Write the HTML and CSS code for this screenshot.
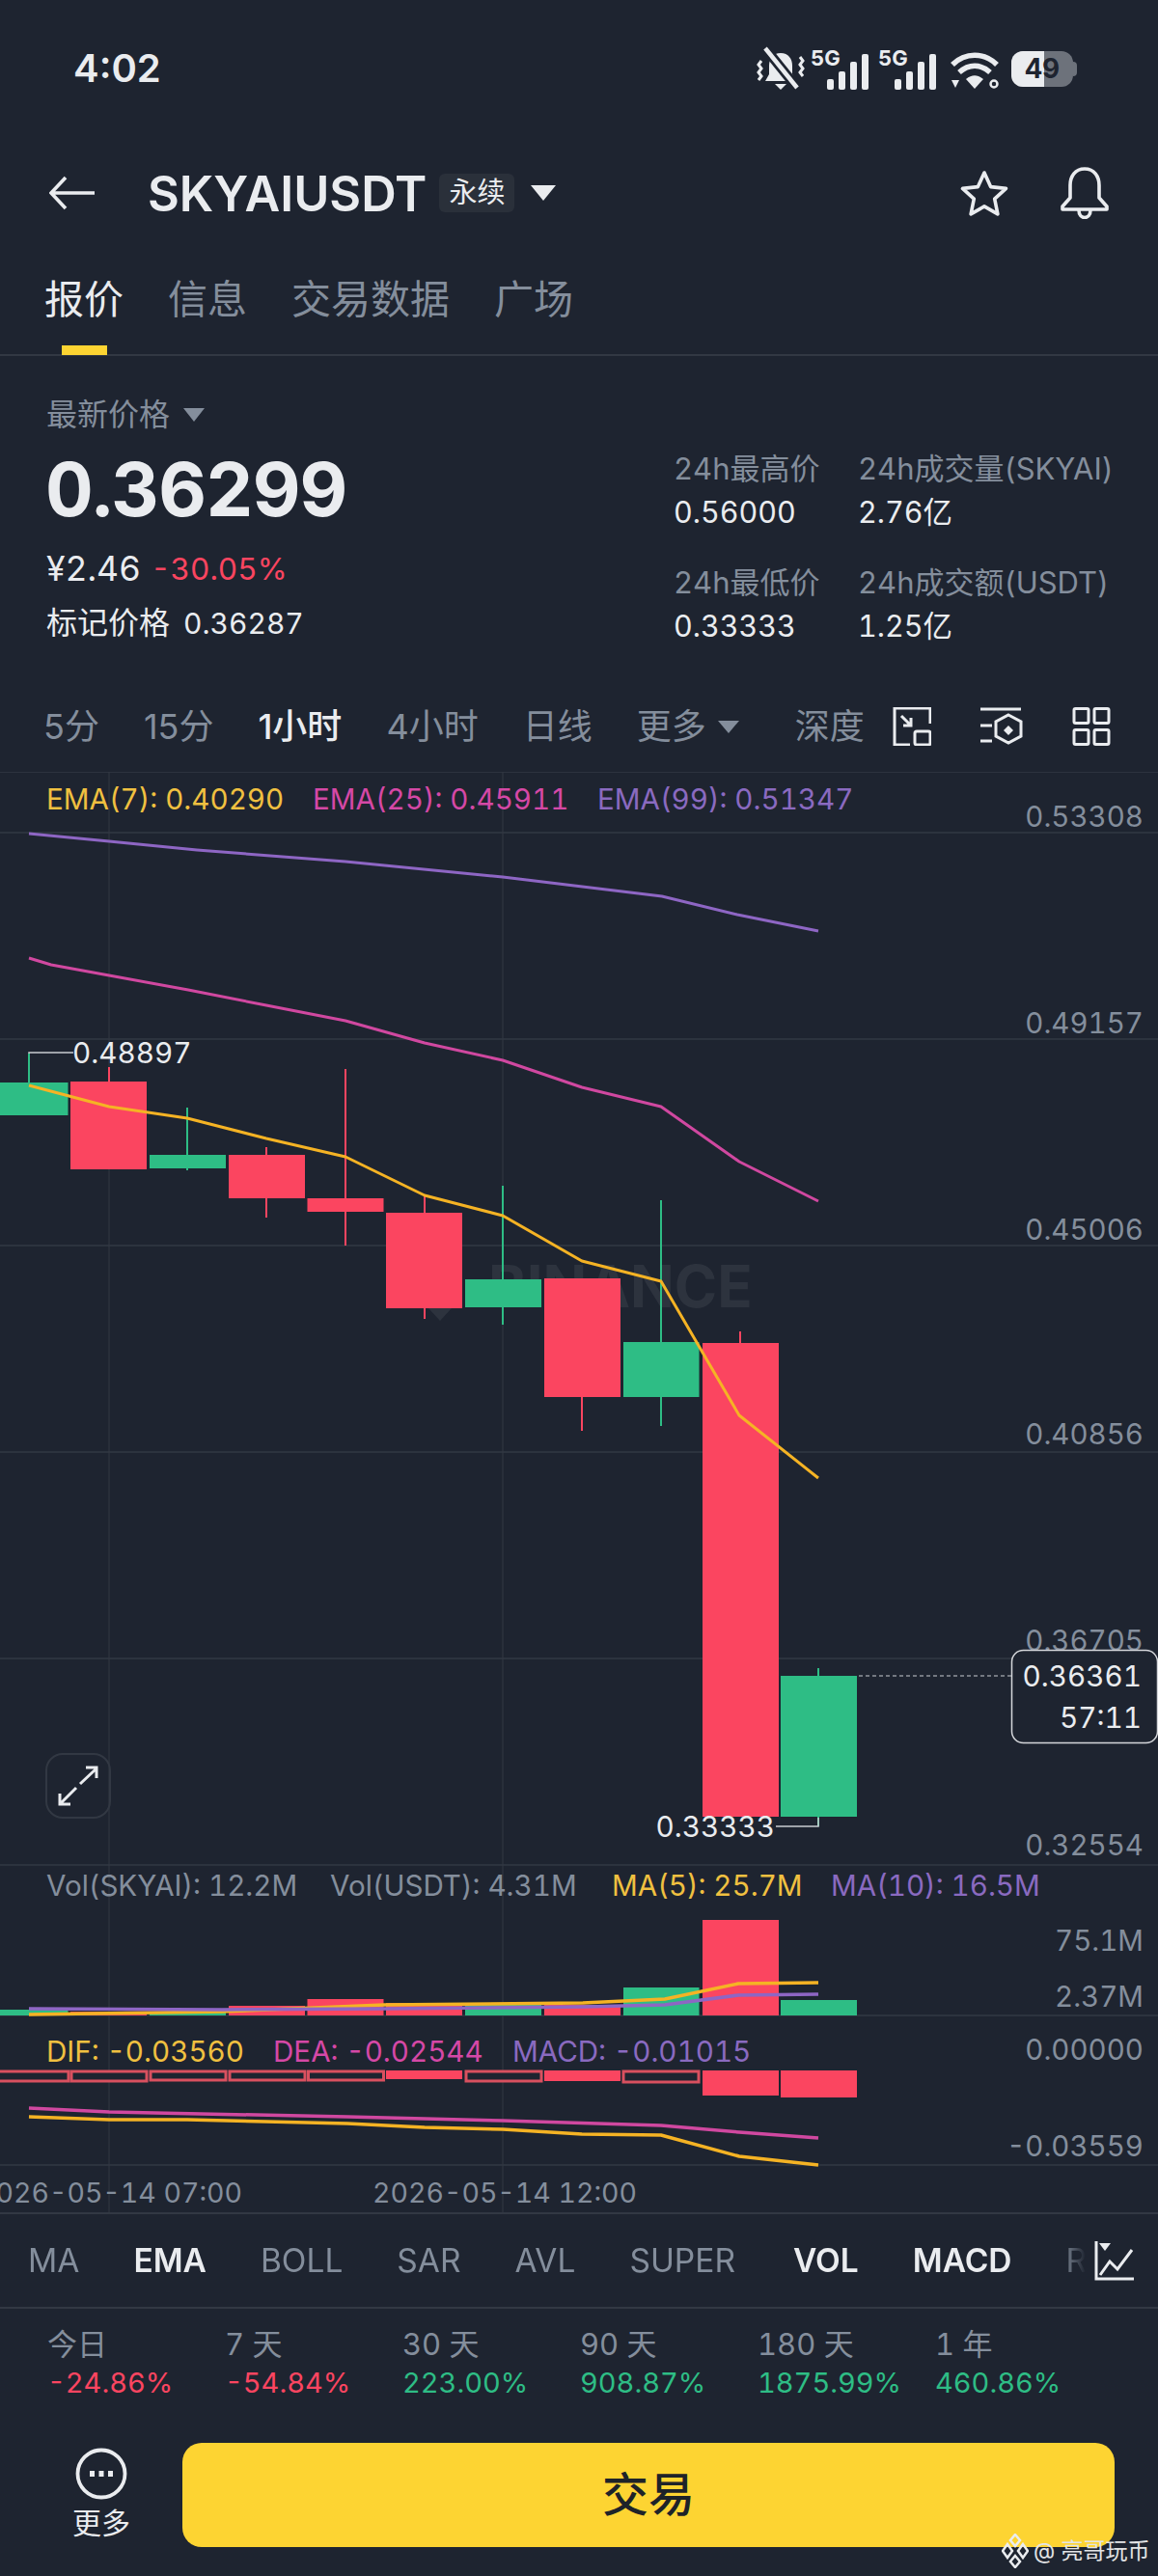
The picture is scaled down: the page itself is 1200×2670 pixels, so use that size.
FILE: index.html
```html
<!DOCTYPE html>
<html lang="zh-CN">
<head>
  <meta charset="UTF-8" />
  <meta name="viewport" content="width=device-width, initial-scale=1" />
  <title>SKYAIUSDT 永续</title>
  <link rel="stylesheet" href="styles.css">
</head>
<body>
  <div class="screen">
    <!-- status bar -->
    <div class="status">
      <div class="clock">4:02</div>
      <div class="status-icons">
        <svg class="ic-mute" viewBox="0 0 50 44" width="50" height="44">
          <path d="M25 5c-8 0-12 6-12 13v9l-4 7h32l-4-7v-9c0-7-4-13-12-13z" fill="#eaecef"/>
          <path d="M19 37h12l-6 6z" fill="#eaecef"/>
          <path d="M9 0l33 41" stroke="#1e2430" stroke-width="10"/>
          <path d="M9 0l33 41" stroke="#eaecef" stroke-width="4.500"/>
          <path d="M5 13l-3 4 3 4-3 4 3 4 -3 4M45 9l3 4-3 4 3 4-3 4 3 4" fill="none" stroke="#eaecef" stroke-width="3"/>
        </svg>
        <svg class="ic-signal" viewBox="0 0 62 44" width="62" height="44">
          <text class="five-g" x="0" y="18">5G</text>
          <rect x="17" y="32" width="7" height="11" rx="2"/>
          <rect x="29" y="24" width="7" height="19" rx="2"/>
          <rect x="41" y="14" width="7" height="29" rx="2"/>
          <rect x="53" y="6" width="7" height="37" rx="2"/>
        </svg>
        <svg class="ic-signal" viewBox="0 0 62 44" width="62" height="44">
          <text class="five-g" x="0" y="18">5G</text>
          <rect x="17" y="32" width="7" height="11" rx="2"/>
          <rect x="29" y="24" width="7" height="19" rx="2"/>
          <rect x="41" y="14" width="7" height="29" rx="2"/>
          <rect x="53" y="6" width="7" height="37" rx="2"/>
        </svg>
        <svg class="ic-wifi" viewBox="0 0 50 40" width="50" height="40">
          <path d="M2 14C15 1 35 1 48 14M9 22c10-9 22-9 32 0" fill="none" stroke="#eaecef" stroke-width="5.500"/>
          <path d="M16 29c6-5 12-5 18 0l-9 10z" fill="#eaecef"/>
          <path d="M1 30h8l-4 8z" fill="#eaecef"/>
          <circle cx="45" cy="34" r="3.500" fill="none" stroke="#eaecef" stroke-width="2.500"/>
        </svg>
        <div class="battery"><span class="battery-fill"></span><span class="battery-num">49</span></div>
      </div>
    </div>

    <!-- symbol header -->
    <div class="symbol-bar">
      <svg class="back" viewBox="0 0 48 36" width="48" height="36">
        <path d="M47 18H3M17 2L2 18l15 16" fill="none" stroke="#eaecef" stroke-width="3.600"/>
      </svg>
      <div class="symbol">SKYAIUSDT</div>
      <div class="perp">永续</div>
      <div class="caret caret-white"></div>
      <div class="symbol-actions">
        <svg viewBox="0 0 50 48" width="50" height="48">
          <path d="M25 3l6.600 14.600 15.900 1.800-11.800 10.800 3.200 15.700L25 37.900l-13.900 8 3.200-15.700L2.500 19.400l15.900-1.800z" fill="none" stroke="#eaecef" stroke-width="3.600" stroke-linejoin="round"/>
        </svg>
        <svg viewBox="0 0 52 54" width="52" height="54">
          <path d="M26 2c-10 0-15 8-15 17v13l-8 9v3h46v-3l-8-9V19c0-9-5-17-15-17z" fill="none" stroke="#eaecef" stroke-width="3.600" stroke-linejoin="round"/>
          <path d="M20 45c0 10 12 10 12 0" fill="none" stroke="#eaecef" stroke-width="3.600"/>
        </svg>
      </div>
    </div>

    <!-- page tabs -->
    <div class="page-tabs">
      <div class="page-tab active">报价</div>
      <div class="page-tab">信息</div>
      <div class="page-tab">交易数据</div>
      <div class="page-tab">广场</div>
    </div>

    <!-- price block -->
    <div class="quote">
      <div class="quote-main">
        <div class="last-label">最新价格<span class="caret caret-gray"></span></div>
        <div class="last-price">0.36299</div>
        <div class="last-sub"><span class="cny">¥2.46</span><span class="red">-30.05%</span></div>
        <div class="mark"><span class="mark-label">标记价格</span><span class="mark-val">0.36287</span></div>
      </div>
      <div class="quote-stats">
        <div class="stat"><div class="stat-label">24h最高价</div><div class="stat-val">0.56000</div></div>
        <div class="stat"><div class="stat-label">24h成交量(SKYAI)</div><div class="stat-val">2.76亿</div></div>
        <div class="stat"><div class="stat-label">24h最低价</div><div class="stat-val">0.33333</div></div>
        <div class="stat"><div class="stat-label">24h成交额(USDT)</div><div class="stat-val">1.25亿</div></div>
      </div>
    </div>

    <!-- interval tabs -->
    <div class="intervals">
      <div class="interval">5分</div>
      <div class="interval">15分</div>
      <div class="interval active">1小时</div>
      <div class="interval">4小时</div>
      <div class="interval">日线</div>
      <div class="interval interval-more">更多<span class="caret caret-gray"></span></div>
      <div class="interval depth">深度</div>
      <div class="interval-icons">
        <svg viewBox="0 0 40 40" width="40" height="40">
          <path d="M18 39H2V1h37v16" fill="none" stroke="#eaecef" stroke-width="3"/>
          <rect x="23" y="25" width="16" height="14" rx="2" fill="none" stroke="#eaecef" stroke-width="3"/>
          <path d="M9 9l10 10M19 11v8h-8" fill="none" stroke="#eaecef" stroke-width="3"/>
        </svg>
        <svg viewBox="0 0 44 40" width="44" height="40">
          <path d="M0 2h42M0 19h12M0 35h12" fill="none" stroke="#eaecef" stroke-width="3"/>
          <path d="M29 11l13 7v15l-13 7-13-7V18z" transform="translate(0 -3)" fill="none" stroke="#eaecef" stroke-width="3"/>
          <path d="M29 19l5 5-5 5-5-5z" fill="#eaecef"/>
        </svg>
        <svg viewBox="0 0 40 40" width="40" height="40">
          <rect x="2" y="1.500" width="15" height="15" rx="1.500" fill="none" stroke="#eaecef" stroke-width="3"/>
          <rect x="23" y="1.500" width="15" height="15" rx="1.500" fill="none" stroke="#eaecef" stroke-width="3"/>
          <rect x="2" y="23.500" width="15" height="15" rx="1.500" fill="none" stroke="#eaecef" stroke-width="3"/>
          <rect x="23" y="23.500" width="15" height="15" rx="1.500" fill="none" stroke="#eaecef" stroke-width="3"/>
        </svg>
      </div>
    </div>

    <!-- chart: viewBox uses page coordinates -->
    <div class="chart">
      <svg class="chart-svg" viewBox="0 800 1200 1493" width="1200" height="1493">
        <g class="grid">
          <path d="M0 800H1200M0 863H1200M0 1077H1200M0 1291H1200M0 1505H1200M0 1719H1200M0 1933H1200M0 2089H1200M0 2244H1200"/>
          <path d="M113 800V2293M521 800V2293"/>
        </g>
        <text class="watermark" x="506" y="1355">BINANCE</text>
        <path class="watermark-mark" d="M444 1356h24l-12 13z"/>

        <text class="leg yellow-f" x="48" y="839">EMA(7): 0.40290</text>
        <text class="leg pink-f" x="324" y="839">EMA(25): 0.45911</text>
        <text class="leg purple-f" x="619" y="839">EMA(99): 0.51347</text>

        <g class="axis">
          <text x="1185" y="857">0.53308</text>
          <text x="1185" y="1071">0.49157</text>
          <text x="1185" y="1285">0.45006</text>
          <text x="1185" y="1497">0.40856</text>
          <text x="1185" y="1711">0.36705</text>
          <text x="1185" y="1923">0.32554</text>
          <text x="1185" y="2022">75.1M</text>
          <text x="1185" y="2080">2.37M</text>
          <text x="1185" y="2135">0.00000</text>
          <text x="1185" y="2235">-0.03559</text>
        </g>

        <!-- wicks -->
        <g class="wick-g">
          <path d="M30 1092V1122M194 1148V1213M521 1229V1373M685 1244V1478M848 1729V1893"/>
        </g>
        <g class="wick-r">
          <path d="M113 1106V1125M276 1189V1262M358 1108V1291M440 1239V1367M603 1350V1483M767 1380V1400"/>
        </g>
        <!-- bodies -->
        <g class="body-g">
          <rect x="0" y="1122" width="70.500" height="34"/>
          <rect x="155" y="1197" width="79" height="14"/>
          <rect x="482" y="1326" width="79" height="29"/>
          <rect x="646" y="1391" width="78.500" height="57"/>
          <rect x="809" y="1737" width="79" height="146"/>
        </g>
        <g class="body-r">
          <rect x="73" y="1121" width="79" height="91"/>
          <rect x="237" y="1197" width="79" height="45"/>
          <rect x="318.500" y="1242" width="79" height="14"/>
          <rect x="400" y="1257" width="79" height="99"/>
          <rect x="564" y="1325" width="79" height="123"/>
          <rect x="728" y="1392" width="79" height="491"/>
        </g>

        <polyline class="line purple-s" points="30,864 113,872 204,881 358,893 521,909 686,929 764,948 848,965"/>
        <polyline class="line pink-s" points="30,993 53,1000 113,1011 195,1026 276,1042 358,1058 440,1081 521,1099 603,1127 685,1147 766,1204 848,1245"/>
        <polyline class="line yellow-s" points="30,1125 113,1147 194,1159 276,1180 358,1199 440,1239 521,1260 603,1307 685,1328 766,1467 848,1532"/>

        <!-- high / low tags -->
        <path class="tag-line" d="M30 1092V1091H76"/>
        <text class="tag" x="75" y="1102">0.48897</text>
        <path class="tag-line" d="M848 1884V1893H804"/>
        <text class="tag tag-end" x="803" y="1904">0.33333</text>

        <!-- live price -->
        <path class="live-line" d="M890 1737H1048"/>
        <rect class="live-box" x="1048.500" y="1710.500" width="151" height="96" rx="12"/>
        <text class="tag tag-end" x="1183" y="1748">0.36361</text>
        <text class="tag tag-end" x="1183" y="1791">57:11</text>

        <text class="leg gray-f" x="48" y="1965">Vol(SKYAI): 12.2M</text>
        <text class="leg gray-f" x="342" y="1965">Vol(USDT): 4.31M</text>
        <text class="leg yellow-f" x="634" y="1965">MA(5): 25.7M</text>
        <text class="leg purple-f" x="861" y="1965">MA(10): 16.5M</text>

        <!-- volume -->
        <g class="body-g">
          <rect x="0" y="2083" width="70.500" height="6"/>
          <rect x="155" y="2085" width="79" height="4"/>
          <rect x="482" y="2078" width="79" height="11"/>
          <rect x="646" y="2060" width="78.500" height="29"/>
          <rect x="809" y="2073" width="79" height="16"/>
        </g>
        <g class="body-r">
          <rect x="73" y="2085" width="79" height="4"/>
          <rect x="237" y="2079" width="79" height="10"/>
          <rect x="318.500" y="2072" width="79" height="17"/>
          <rect x="400" y="2076" width="79" height="13"/>
          <rect x="564" y="2078" width="79" height="11"/>
          <rect x="728" y="1990" width="79" height="99"/>
        </g>
        <polyline class="line-thick yellow-s" points="30,2088 230,2085 398,2078 604,2076 689,2072 765,2056 848,2055"/>
        <polyline class="line-thick purple-s" points="30,2082 230,2083 398,2082 604,2080 689,2078 765,2068 848,2067"/>

        <text class="leg yellow-f" x="48" y="2137">DIF: -0.03560</text>
        <text class="leg pink-f" x="283" y="2137">DEA: -0.02544</text>
        <text class="leg purple-f" x="531" y="2137">MACD: -0.01015</text>

        <!-- macd histogram -->
        <g class="hollow">
          <rect x="-3" y="2147" width="74" height="10"/>
          <rect x="74" y="2147" width="78" height="10"/>
          <rect x="156" y="2147" width="78" height="9"/>
          <rect x="238" y="2147" width="78" height="9"/>
          <rect x="319.500" y="2147" width="78" height="9"/>
          <rect x="483" y="2147" width="78" height="10"/>
          <rect x="646" y="2147" width="78" height="11"/>
        </g>
        <g class="body-r">
          <rect x="400" y="2146" width="79" height="9"/>
          <rect x="564" y="2146" width="79" height="11"/>
          <rect x="728" y="2146" width="79" height="26"/>
          <rect x="809" y="2146" width="79" height="28"/>
        </g>
        <polyline class="line-thick pink-s" points="30,2185 113,2189 360,2194 521,2198 685,2203 766,2210 848,2216"/>
        <polyline class="line-thick yellow-s" points="30,2194 113,2197 194,2197 360,2201 440,2205 521,2207 603,2212 685,2213 766,2235 848,2244"/>

        <text class="axis-date" x="-23" y="2283">2026-05-14 07:00</text>
        <text class="axis-date" x="386" y="2283">2026-05-14 12:00</text>
      </svg>
      <div class="expand">
        <svg viewBox="0 0 44 44" width="44" height="44">
          <path d="M24 20L41 4M30 3h11v11M20 24L3 41M3 30v11h11" fill="none" stroke="#eaecef" stroke-width="3"/>
        </svg>
      </div>
    </div>

    <!-- indicators -->
    <div class="indicators">
      <div class="ind-list">
        <div class="ind">MA</div>
        <div class="ind active">EMA</div>
        <div class="ind">BOLL</div>
        <div class="ind">SAR</div>
        <div class="ind">AVL</div>
        <div class="ind">SUPER</div>
        <div class="ind-sep"></div>
        <div class="ind active">VOL</div>
        <div class="ind active">MACD</div>
        <div class="ind">RSI</div>
      </div>
      <svg class="ind-icon" viewBox="0 0 42 42" width="42" height="42">
        <path d="M2 1V40H41" fill="none" stroke="#eaecef" stroke-width="3"/>
        <path d="M6 36l10-14 8 8 15-20" fill="none" stroke="#eaecef" stroke-width="3"/>
        <path d="M5 3h12l-6 8z" fill="#eaecef"/>
      </svg>
    </div>

    <!-- period returns -->
    <div class="periods">
      <div class="period"><div class="period-label">今日</div><div class="red">-24.86%</div></div>
      <div class="period"><div class="period-label">7 天</div><div class="red">-54.84%</div></div>
      <div class="period"><div class="period-label">30 天</div><div class="green">223.00%</div></div>
      <div class="period"><div class="period-label">90 天</div><div class="green">908.87%</div></div>
      <div class="period"><div class="period-label">180 天</div><div class="green">1875.99%</div></div>
      <div class="period"><div class="period-label">1 年</div><div class="green">460.86%</div></div>
    </div>

    <!-- footer -->
    <div class="footer">
      <div class="more">
        <svg viewBox="0 0 54 54" width="54" height="54">
          <circle cx="27" cy="27" r="24.500" fill="none" stroke="#eaecef" stroke-width="3.800"/>
          <path d="M15 24h5v6h-5zM24.500 24h5v6h-5zM34 24h5v6h-5z" fill="#eaecef"/>
        </svg>
        <div class="more-label">更多</div>
      </div>
      <div class="trade-btn">交易</div>
    </div>

    <div class="credit">
      <svg viewBox="0 0 28 36" width="28" height="36">
        <path d="M14 1l5 6-5 6-5-6zM6 11l5 7-5 7-5-7zM22 11l5 7-5 7-5-7zM14 23l5 6-5 6-5-6z" fill="none" stroke="#eaecef" stroke-width="2.500"/>
      </svg>
      <span>@ 亮哥玩币</span>
    </div>
  </div>
</body>
</html>
```

FILE: styles.css
```css
:root {
  --bg: #1e2430;
  --line: #323843;
  --text: #eaecef;
  --muted: #848e9c;
  --red: #fb4560;
  --green: #2ebd85;
  --pink: #d548a6;
  --purple: #8a6ac0;
  --brand: #fdd432;
}

* {
  box-sizing: border-box;
  margin: 0;
  padding: 0;
}

body {
  background: var(--bg);
  color: var(--text);
  font-family: Inter, "Noto Sans CJK SC", sans-serif;
  font-variant-numeric: tabular-nums;
}

.screen {
  position: relative;
  width: 1200px;
  height: 2670px;
  overflow: hidden;
  background: var(--bg);
}

.red { color: var(--red); }
.green { color: var(--green); }

.caret {
  display: inline-block;
  width: 0;
  height: 0;
  border-left: 13px solid transparent;
  border-right: 13px solid transparent;
  border-top: 16px solid var(--muted);
}
.caret-white { border-top-color: var(--text); }

/* Status bar */
.status {
  height: 130px;
  display: flex;
  justify-content: space-between;
  align-items: flex-start;
  padding: 47px 84px 0 76px;
}
.clock {
  font-size: 40px;
  line-height: 48px;
  font-weight: 600;
  font-variant-numeric: normal;
}
.status-icons {
  display: flex;
  align-items: flex-start;
}
.status-icons svg { overflow: visible; }
.ic-mute { margin-top: 3px; margin-right: 6px; }
.ic-signal { margin-top: 3px; margin-right: 8px; fill: var(--text); }
.ic-wifi { margin-top: 6px; margin-left: 5px; margin-right: 13px; }
.five-g {
  font-size: 22px;
  font-weight: 700;
}
.battery {
  position: relative;
  width: 64px;
  height: 37px;
  margin-top: 6px;
  margin-right: 4px;
  border-radius: 12px;
  background: #6d727b;
  text-align: center;
  font-size: 28px;
  line-height: 37px;
  font-weight: 700;
  color: #1e2430;
}
.battery::after {
  content: "";
  position: absolute;
  right: -4px;
  top: 11px;
  width: 4px;
  height: 15px;
  border-radius: 0 4px 4px 0;
  background: #6d727b;
}
.battery-fill {
  position: absolute;
  top: 0;
  left: 0;
  bottom: 0;
  width: 34px;
  border-radius: 12px 0 0 12px;
  background: var(--text);
}
.battery-num { position: relative; }

/* Symbol header */
.symbol-bar {
  height: 140px;
  display: flex;
  align-items: center;
  padding: 0 50px 0 51px;
}
.back { margin-right: 54px; }
.symbol {
  font-size: 50.500px;
  font-weight: 600;
  margin-right: 13px;
}
.perp {
  width: 78px;
  height: 40px;
  border-radius: 6px;
  background: #2a303a;
  font-size: 29px;
  line-height: 40px;
  text-align: center;
  margin-right: 17px;
}
.symbol-actions {
  margin-left: auto;
  display: flex;
  align-items: center;
  gap: 53px;
}

/* Page tabs */
.page-tabs {
  height: 99px;
  display: flex;
  gap: 46px;
  padding: 0 46px;
  border-bottom: 2px solid var(--line);
}
.page-tab {
  position: relative;
  font-size: 41px;
  line-height: 80px;
  color: var(--muted);
}
.page-tab.active { color: var(--text); }
.page-tab.active::after {
  content: "";
  position: absolute;
  left: 18px;
  right: 17px;
  top: 88px;
  height: 10px;
  background: var(--brand);
}

/* Price block */
.quote {
  height: 351px;
  display: flex;
  justify-content: space-between;
  padding: 0 0 0 48px;
}
.quote-main { padding-top: 38px; }
.last-label {
  display: flex;
  align-items: center;
  gap: 14px;
  font-size: 32px;
  line-height: 46px;
  color: var(--muted);
}
.last-label .caret {
  border-left-width: 11px;
  border-right-width: 11px;
  border-top-width: 14px;
}
.last-price {
  font-size: 77px;
  line-height: 94px;
  font-weight: 700;
  letter-spacing: -1px;
  margin-top: 7px;
  margin-left: -1px;
}
.last-sub {
  display: flex;
  align-items: center;
  gap: 10px;
  font-size: 31.500px;
  line-height: 44px;
  margin-top: 14px;
}
.cny { font-size: 35.500px; }
.mark {
  display: flex;
  align-items: center;
  gap: 14px;
  line-height: 46px;
  margin-top: 11px;
}
.mark-label { font-size: 32px; }
.mark-val { font-size: 30px; }
.quote-stats {
  display: grid;
  grid-template-columns: 191px 261px;
  grid-auto-rows: 118px;
  margin-right: 50px;
  padding-top: 94px;
}
.stat-label {
  font-size: 31px;
  line-height: 46px;
  color: var(--muted);
  white-space: nowrap;
}
.stat-val {
  font-size: 30.500px;
  line-height: 46px;
  margin-top: -1px;
}

/* Interval tabs */
.intervals {
  height: 80px;
  display: flex;
  align-items: center;
  gap: 46px;
  padding: 0 48px 14px 45px;
}
.interval {
  font-size: 36px;
  line-height: 48px;
  color: var(--muted);
  white-space: nowrap;
  font-variant-numeric: normal;
}
.interval.active {
  color: var(--text);
  font-weight: 500;
}
.interval-more {
  display: flex;
  align-items: center;
  gap: 12px;
}
.interval-more .caret {
  border-left-width: 11px;
  border-right-width: 11px;
  border-top-width: 13px;
}
.depth { margin-left: 12px; }
.interval-icons {
  display: flex;
  align-items: center;
  gap: 51px;
  margin-left: -17px;
}

/* Chart */
.chart {
  position: relative;
  height: 1493px;
}
.chart-svg { display: block; }
.grid path {
  fill: none;
  stroke: var(--line);
  stroke-width: 1.500;
}
.grid path + path { stroke-width: 1; }
.watermark {
  font-size: 60px;
  font-weight: 700;
  fill: #2d333e;
}
.watermark-mark { fill: #2d333e; }
.leg { font-size: 29.600px; }
.gray-f { fill: var(--muted); }
.yellow-f { fill: #f0c040; }
.pink-f { fill: var(--pink); }
.purple-f { fill: var(--purple); }
.axis text {
  font-size: 29.500px;
  text-anchor: end;
  fill: var(--muted);
}
.wick-g path, .wick-r path { fill: none; stroke-width: 2; }
.wick-g path { stroke: var(--green); }
.wick-r path { stroke: var(--red); }
.body-g { fill: var(--green); }
.body-r { fill: var(--red); }
.line, .line-thick {
  fill: none;
  stroke-width: 3;
  stroke-linejoin: round;
}
.line-thick { stroke-width: 3.500; }
.yellow-s { stroke: #f5b324; }
.pink-s { stroke: #d048a0; }
.purple-s { stroke: #8e66c4; }
.hollow rect {
  fill: var(--bg);
  stroke: #d9505f;
  stroke-width: 3;
}
.tag {
  font-size: 29.700px;
  fill: var(--text);
}
.tag-end { text-anchor: end; }
.tag-line {
  fill: none;
  stroke: #c9ccd1;
  stroke-width: 1.500;
}
.live-line {
  fill: none;
  stroke: #c9ccd1;
  stroke-width: 1;
  stroke-dasharray: 4 3;
}
.live-box {
  fill: var(--bg);
  stroke: #d5d7db;
  stroke-width: 1.500;
}
.axis-date {
  font-size: 28.500px;
  fill: var(--muted);
}
.expand {
  position: absolute;
  left: 47px;
  top: 1017px;
  width: 68px;
  height: 68px;
  display: flex;
  align-items: center;
  justify-content: center;
  border: 2px solid var(--line);
  border-radius: 18px;
}

/* Indicator row */
.indicators {
  height: 100px;
  display: flex;
  align-items: center;
  justify-content: space-between;
  padding: 0 24px 0 29px;
  border-top: 2px solid var(--line);
  border-bottom: 2px solid var(--line);
}
.ind-list {
  width: 1100px;
  display: flex;
  align-items: center;
  gap: 56px;
  overflow: hidden;
  -webkit-mask-image: linear-gradient(90deg, #000 1072px, transparent 1096px);
  mask-image: linear-gradient(90deg, #000 1072px, transparent 1096px);
}
.ind {
  font-size: 33.500px;
  line-height: 48px;
  color: var(--muted);
  white-space: nowrap;
}
.ind.active {
  color: var(--text);
  font-weight: 600;
}
.ind-sep {
  width: 2px;
  height: 36px;
  margin: 0 -26px 0 -26px;
  background: var(--line);
}

/* Period returns */
.periods {
  height: 117px;
  display: flex;
  padding: 17px 0 0 49px;
  font-size: 29px;
  line-height: 40px;
}
.period { width: 184px; }
.period-label {
  font-size: 31px;
  color: var(--muted);
}

/* Footer */
.footer {
  height: 160px;
  display: flex;
  align-items: flex-start;
  padding: 22px 45px 0 72px;
}
.more {
  width: 66px;
  margin-right: 51px;
  padding-top: 5px;
  text-align: center;
}
.more svg { display: block; margin: 0 auto; }
.more-label {
  font-size: 30px;
  line-height: 42px;
  margin-top: 3px;
}
.trade-btn {
  width: 966px;
  height: 108px;
  border-radius: 20px;
  background: var(--brand);
  color: #1e2329;
  font-size: 48px;
  font-weight: 500;
  line-height: 108px;
  text-align: center;
}

.credit {
  position: absolute;
  left: 1038px;
  top: 2626px;
  display: flex;
  align-items: center;
  gap: 5px;
  color: #e3e4e6;
  font-size: 23px;
  line-height: 36px;
  white-space: nowrap;
}
```
